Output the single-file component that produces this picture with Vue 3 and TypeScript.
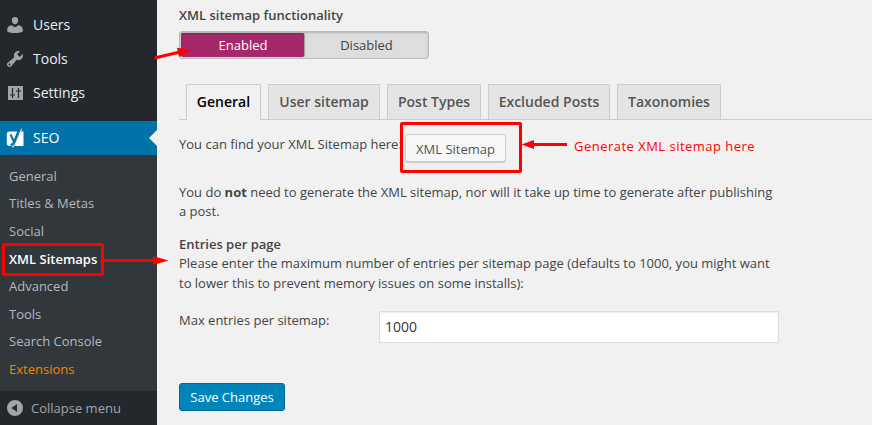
<script setup lang="ts">
import { ref } from 'vue'

interface SubItem { label: string; kind?: 'current' | 'highlight' }
interface Tab { label: string; width: number }

const subItems: SubItem[] = [
  { label: 'General' },
  { label: 'Titles & Metas' },
  { label: 'Social' },
  { label: 'XML Sitemaps', kind: 'current' },
  { label: 'Advanced' },
  { label: 'Tools' },
  { label: 'Search Console' },
  { label: 'Extensions', kind: 'highlight' },
]
const tabs: Tab[] = [
  { label: 'General', width: 75 },
  { label: 'User sitemap', width: 112 },
  { label: 'Post Types', width: 94 },
  { label: 'Excluded Posts', width: 122 },
  { label: 'Taxonomies', width: 104 },
]
const activeTab = ref('General')
const enabled = ref(true)
const maxEntries = ref('1000')
</script>

<template>
  <div class="page">
    <aside class="sidebar">
      <nav class="top-menu">
        <a class="menu-item">
          <svg class="icon" viewBox="0 0 20 20"><path d="M10 9.300c-1.900 0-3.200-1.700-3.200-4C6.800 3 8 2 10 2s3.200 1 3.200 3.300c0 2.300-1.300 4-3.200 4zM6.500 10.200L10 12.200l3.500-2c2.700.2 4.300 2 4.300 4.600v1.700c-2 1-4.600 1.500-7.800 1.500s-5.800-.5-7.800-1.500v-1.700c0-2.600 1.600-4.400 4.300-4.600z" /></svg>
          <span>Users</span>
        </a>
        <a class="menu-item">
          <svg class="icon" viewBox="0 0 20 20"><path d="M16.680 9.770a4.543 4.543 0 0 1-4.950.99l-5.410 6.520c-.99.99-2.590.99-3.580 0s-.99-2.590 0-3.570l6.520-5.420c-.68-1.650-.35-3.610.99-4.950 1.280-1.280 3.120-1.620 4.720-1.060l-2.890 2.890 2.820 2.820 2.860-2.870c.53 1.580.18 3.390-1.080 4.650zM3.810 16.210c.4.390 1.040.390 1.430 0 .4-.4.4-1.040 0-1.430-.39-.4-1.030-.4-1.430 0a1.020 1.020 0 0 0 0 1.430z" /></svg>
          <span>Tools</span>
        </a>
        <a class="menu-item">
          <svg class="icon settings" viewBox="0 0 20 20"><path d="M3 3h15v14H3z" /><path class="slider" d="M7.500 5v10M5 12h5M13.500 5v10M11 8h5" /></svg>
          <span>Settings</span>
        </a>
      </nav>
      <a class="menu-item seo">
        <svg class="icon yoast" viewBox="0 0 20 20">
          <path class="white" d="M4.500 3.500H18.500V18H4.500Q1.800 18 1.800 15V6.500Q1.800 3.500 4.500 3.500z" />
          <path class="gap" d="M16 1L10.500 14.500Q9 18.800 5.500 19" />
          <path class="stem" d="M5.600 6.500L9 14M9 14L13.800 2.500M9.200 13.500Q8.300 16.800 5.500 16.800" />
          <path class="white-line" d="M16.600.8L10.900 15Q9.500 18.800 7 19.300" />
        </svg>
        <span>SEO</span>
      </a>
      <nav class="submenu">
        <a v-for="item in subItems" :key="item.label" class="sub-item" :class="item.kind"><span>{{ item.label }}</span></a>
      </nav>
      <a class="collapse">
        <svg class="icon" viewBox="0 0 20 20"><path fill-rule="evenodd" d="M10 2a8 8 0 1 0 0 16a8 8 0 0 0 0-16zM12 6v8l-5.500-4z" /></svg>
        <span>Collapse menu</span>
      </a>
    </aside>

    <main class="content">
      <h2 class="heading">XML sitemap functionality</h2>
      <div class="toggle">
        <button class="option" :class="{ on: enabled }" @click="enabled = true">Enabled</button>
        <button class="option" :class="{ on: !enabled }" @click="enabled = false">Disabled</button>
      </div>
      <div class="tabs">
        <a v-for="t in tabs" :key="t.label" class="tab" :class="{ active: t.label === activeTab }" :style="{ width: t.width + 'px' }" @click="activeTab = t.label">{{ t.label }}</a>
      </div>
      <div class="find-row">
        <span class="find-text">You can find your XML Sitemap here:</span>
        <button class="button">XML Sitemap</button>
      </div>
      <p class="note"><span class="line">You do <b>not</b> need to generate the XML sitemap, nor will it take up time to generate after publishing</span><span class="line">a post.</span></p>
      <h3 class="heading entries">Entries per page</h3>
      <p class="help"><span class="line">Please enter the maximum number of entries per sitemap page (defaults to 1000, you might want</span><span class="line">to lower this to prevent memory issues on some installs):</span></p>
      <div class="field">
        <label class="label" for="max">Max entries per sitemap:</label>
        <input id="max" v-model="maxEntries" class="input" type="text" />
      </div>
      <button class="save">Save Changes</button>
    </main>

    <svg class="marks" viewBox="0 0 872 425">
      <rect x="3.500" y="244.500" width="99" height="30" rx=".5" />
      <path d="M104 260.500H156" />
      <path class="head" d="M153 256L168.500 260.500L153 265z" />
      <path d="M154.500 58L180 52" />
      <path class="head" d="M177 47.800L191.500 49.700L179 57z" />
      <rect x="401.500" y="123.500" width="119" height="48" rx=".5" />
      <path d="M532 144.500H567" />
      <path class="head" d="M521.500 144.500L534 140V149z" />
    </svg>
    <span class="caption">Generate XML sitemap here</span>
  </div>
</template>

<style>
body { margin: 0; background: #f1f1f1; }
</style>

<style scoped>
* { box-sizing: border-box; }
.page { position: relative; display: flex; width: 872px; height: 425px; overflow: hidden; background: #f1f1f1; color: #444; font-family: "Open Sans", sans-serif; font-size: 13px; }
button, input { font-family: inherit; margin: 0; }
.sidebar { width: 157px; flex: none; display: flex; flex-direction: column; background: #23282d; color: #eee; }
.top-menu { padding-top: 8px; height: 121px; }
.menu-item { display: flex; align-items: center; height: 34px; padding: 0 0 1px 5px; gap: 8px; font-size: 14px; }
.icon { width: 20px; height: 20px; fill: #a0a5aa; flex: none; }
.slider { fill: none; stroke: #23282d; stroke-width: 1.200; }
.seo { position: relative; background: #0073aa; color: #fff; }
.seo::after { content: ""; position: absolute; right: 0; top: 9px; border: 8px solid transparent; border-left: 0; border-right-color: #f1f1f1; }
.yoast { overflow: visible; }
.white { fill: #fff; }
.gap { fill: none; stroke: #0073aa; stroke-width: 1.500; }
.stem { fill: none; stroke: #0073aa; stroke-width: 2; }
.white-line { fill: none; stroke: #fff; stroke-width: 1; }
.submenu { height: 236px; padding: 7.300px 0 0 9px; background: #32373c; color: #b4b9be; }
.sub-item { display: flex; align-items: center; height: 27.540px; }
.sub-item:nth-child(2) { padding-bottom: 1.500px; }
.current { color: #fff; font-weight: 600; }
.highlight { color: #f18500; }
.collapse { display: flex; align-items: center; height: 34px; padding-left: 5px; gap: 6px; color: #a0a5aa; }
.content { flex: 1; padding: 5px 0 0 22px; }
.heading { margin: 0; font-size: 13px; line-height: 20px; font-weight: 600; }
.toggle { display: flex; width: 250px; height: 28px; margin-top: 6px; padding: 1px; border: 1px solid #bbb; border-radius: 3px; background: #ddd; box-shadow: inset 0 1px 2px rgba(0, 0, 0, .2); }
.option { flex: none; width: 123px; padding: 0 0 0 1px; border: 0; background: transparent; color: #444; font-size: 13px; line-height: 24px; }
.option + .option { padding-left: 2px; }
.option.on { background: #a4286a; color: #fff; border-radius: 2px; box-shadow: 1px 0 1px #999, inset 0 1px 1px #882258; }
.tabs { display: flex; gap: 7px; margin-top: 25px; padding-left: 7px; height: 36px; border-bottom: 1px solid #ccc; }
.tab { height: 35px; border: 1px solid #ccc; border-bottom: 0; background: #e4e4e4; color: #555; font-size: 14px; font-weight: 600; line-height: 34px; text-align: center; white-space: nowrap; }
.tab.active { height: 36px; background: #f1f1f1; color: #000; }
.find-row { display: flex; height: 62px; padding-top: 14px; gap: 4px; }
.find-text { width: 222px; line-height: 20px; white-space: nowrap; }
.button { width: 101px; height: 28px; padding: 2px 0 0; border: 1px solid #ccc; border-radius: 3px; background: #f7f7f7; color: #555; font-size: 13px; line-height: 24px; box-shadow: 0 1px 0 #ccc; }
.note, .help { margin: 0; }
.line { display: block; height: 20px; line-height: 20px; white-space: nowrap; }
.note .line { height: 19px; }
b { font-weight: 700; }
.entries { margin-top: 14px; }
.help { margin-top: -1px; }
.field { display: flex; margin-top: 18px; }
.label { width: 200px; line-height: 20px; margin-top: -1px; }
.input { width: 400px; height: 32px; border: 1px solid #ddd; padding: 2px 5px 4px; color: #32373c; background: #fff; font-size: 14px; box-shadow: inset 0 1px 2px rgba(0, 0, 0, .07); }
.save { display: block; width: 106px; height: 28px; margin-top: 40px; padding: 0; border: 1px solid #006799; border-radius: 3px; background: #0085ba; color: #fff; font-size: 13px; line-height: 24px; }
.marks { position: absolute; inset: 0; width: 872px; height: 425px; pointer-events: none; fill: none; stroke: #f00; stroke-width: 3; }
.marks .head { fill: #f00; stroke: none; }
.caption { position: absolute; left: 574px; top: 137px; line-height: 18px; color: #f00; letter-spacing: .48px; white-space: nowrap; }
</style>
